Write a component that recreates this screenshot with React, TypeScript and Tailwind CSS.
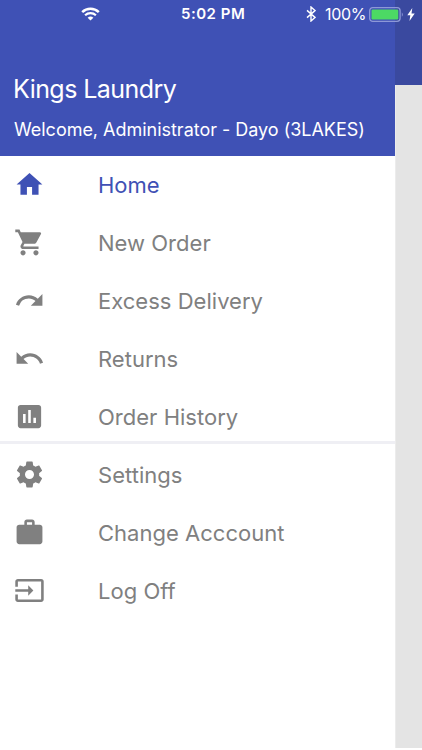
import type { IconType } from 'react-icons';
import {
  MdAssessment,
  MdHome,
  MdInput,
  MdRedo,
  MdShoppingCart,
  MdUndo,
  MdWork,
} from 'react-icons/md';

interface MenuItem {
  label: string;
  icon: IconType;
  active?: boolean;
}

const GearIcon: IconType = ({ className }) => (
  <svg className={className} viewBox="0 0 24 24" fill="currentColor">
    <path d="M19.43 12.98c.04-.32.07-.64.07-.98s-.03-.66-.07-.98l2.11-1.65c.19-.15.24-.42.12-.64l-2-3.46c-.12-.22-.39-.3-.61-.22l-2.49 1c-.52-.4-1.08-.73-1.69-.98l-.38-2.65C14.46 2.18 14.25 2 14 2h-4c-.25 0-.46.18-.49.42l-.38 2.65c-.61.25-1.17.59-1.69.98l-2.49-1c-.23-.09-.49 0-.61.22l-2 3.46c-.13.22-.07.49.12.64l2.11 1.65c-.04.32-.07.65-.07.98s.03.66.07.98l-2.11 1.65c-.19.15-.24.42-.12.64l2 3.46c.12.22.39.3.61.22l2.49-1c.52.4 1.08.73 1.69.98l.38 2.65c.03.24.24.42.49.42h4c.25 0 .46-.18.49-.42l.38-2.65c.61-.25 1.17-.59 1.69-.98l2.49 1c.23.09.49 0 .61-.22l2-3.46c.12-.22.07-.49-.12-.64l-2.11-1.65zM12 15.5c-1.93 0-3.5-1.57-3.5-3.5s1.57-3.5 3.5-3.5 3.5 1.57 3.5 3.5-1.57 3.5-3.5 3.5z" />
  </svg>
);

const MAIN_ITEMS: MenuItem[] = [
  { label: 'Home', icon: MdHome, active: true },
  { label: 'New Order', icon: MdShoppingCart },
  { label: 'Excess Delivery', icon: MdRedo },
  { label: 'Returns', icon: MdUndo },
  { label: 'Order History', icon: MdAssessment },
];

const ACCOUNT_ITEMS: MenuItem[] = [
  { label: 'Settings', icon: GearIcon },
  { label: 'Change Acccount', icon: MdWork },
  { label: 'Log Off', icon: MdInput },
];

function StatusBar() {
  return (
    <div className="absolute inset-x-0 top-0 z-10 flex h-7 items-center text-white">
      <svg className="ml-[81px] h-[14px] w-[19px]" viewBox="0 0 19 14" fill="none">
        <path d="M1.2 5.1a12 12 0 0 1 16.6 0" stroke="currentColor" strokeWidth="2.5" />
        <path d="M4.1 8.2a7.8 7.8 0 0 1 10.8 0" stroke="currentColor" strokeWidth="2.2" />
        <path d="M6.6 10.7a4.3 4.3 0 0 1 5.8 0L9.5 13.6z" fill="currentColor" />
      </svg>
      <span className="ml-[81px] w-[80px] text-[15px] font-semibold tracking-[0.5px] whitespace-nowrap">5:02 PM</span>
      <svg className="ml-[45px] h-[16px] w-[10px]" viewBox="0 0 10 16" fill="none" stroke="currentColor" strokeWidth="1.4">
        <path d="M1 4.4l8 7-4 3.6V1l4 3.6-8 7" />
      </svg>
      <span className="ml-[9px] w-[42px] text-[16px] tracking-[-0.3px] whitespace-nowrap">100%</span>
      <svg className="ml-[2px] h-[15px] w-[35px]" viewBox="0 0 35 15" fill="none">
        <rect x="0.7" y="0.7" width="30.4" height="13.6" rx="3" stroke="#8d98d7" strokeWidth="1.3" />
        <rect x="2.5" y="2.5" width="26.8" height="10" rx="1.2" fill="#4cd964" />
        <path d="M32.8 5.2q2 2.3 0 4.6z" fill="#8d98d7" />
      </svg>
      <svg className="ml-[3px] h-[13px] w-[8px]" viewBox="0 0 8 13" fill="currentColor">
        <path d="M5.3 0L0.3 7.2h3L2.5 13 7.7 5.4H4.5z" />
      </svg>
    </div>
  );
}

function MenuRow({ label, icon: Icon, active }: MenuItem) {
  return (
    <button
      className={`flex h-[58px] w-full items-center pl-[14px] text-left ${
        active ? 'text-[#3f51b5]' : 'text-[#808080]'
      }`}
    >
      <Icon className="mb-px h-[31px] w-[31px] shrink-0" />
      <span className="ml-[53px] text-[22px] tracking-[0.02px]">{label}</span>
    </button>
  );
}

export default function App() {
  return (
    <div className="relative flex h-[750px] w-[422px] overflow-hidden bg-white font-['Inter','Liberation_Sans',sans-serif]">
      <StatusBar />

      {/* Drawer */}
      <aside className="flex w-[395px] shrink-0 flex-col bg-white">
        <header className="flex h-[156px] flex-col justify-end bg-[#3f51b5] pb-[14px] pl-[13px] text-white">
          <h1 className="text-[25px] leading-[32px] tracking-[-0.55px]">Kings Laundry</h1>
          <p className="mt-[13px] pl-px text-[18px] leading-[24px] tracking-[-0.02px] whitespace-nowrap">
            Welcome, Administrator - Dayo (3LAKES)
          </p>
        </header>
        <nav>
          {MAIN_ITEMS.map((item) => (
            <MenuRow key={item.label} {...item} />
          ))}
          <div className="-mt-[5px] mb-[2px] h-[3px] bg-[#efeff4]" />
          {ACCOUNT_ITEMS.map((item) => (
            <MenuRow key={item.label} {...item} />
          ))}
        </nav>
      </aside>

      {/* Dimmed page behind the drawer */}
      <div className="flex flex-1 flex-col">
        <div className="h-[85px] bg-[#3a499f]" />
        <div className="h-[663px] border-l border-[#ececec] bg-[#e4e4e4]" />
      </div>
    </div>
  );
}
